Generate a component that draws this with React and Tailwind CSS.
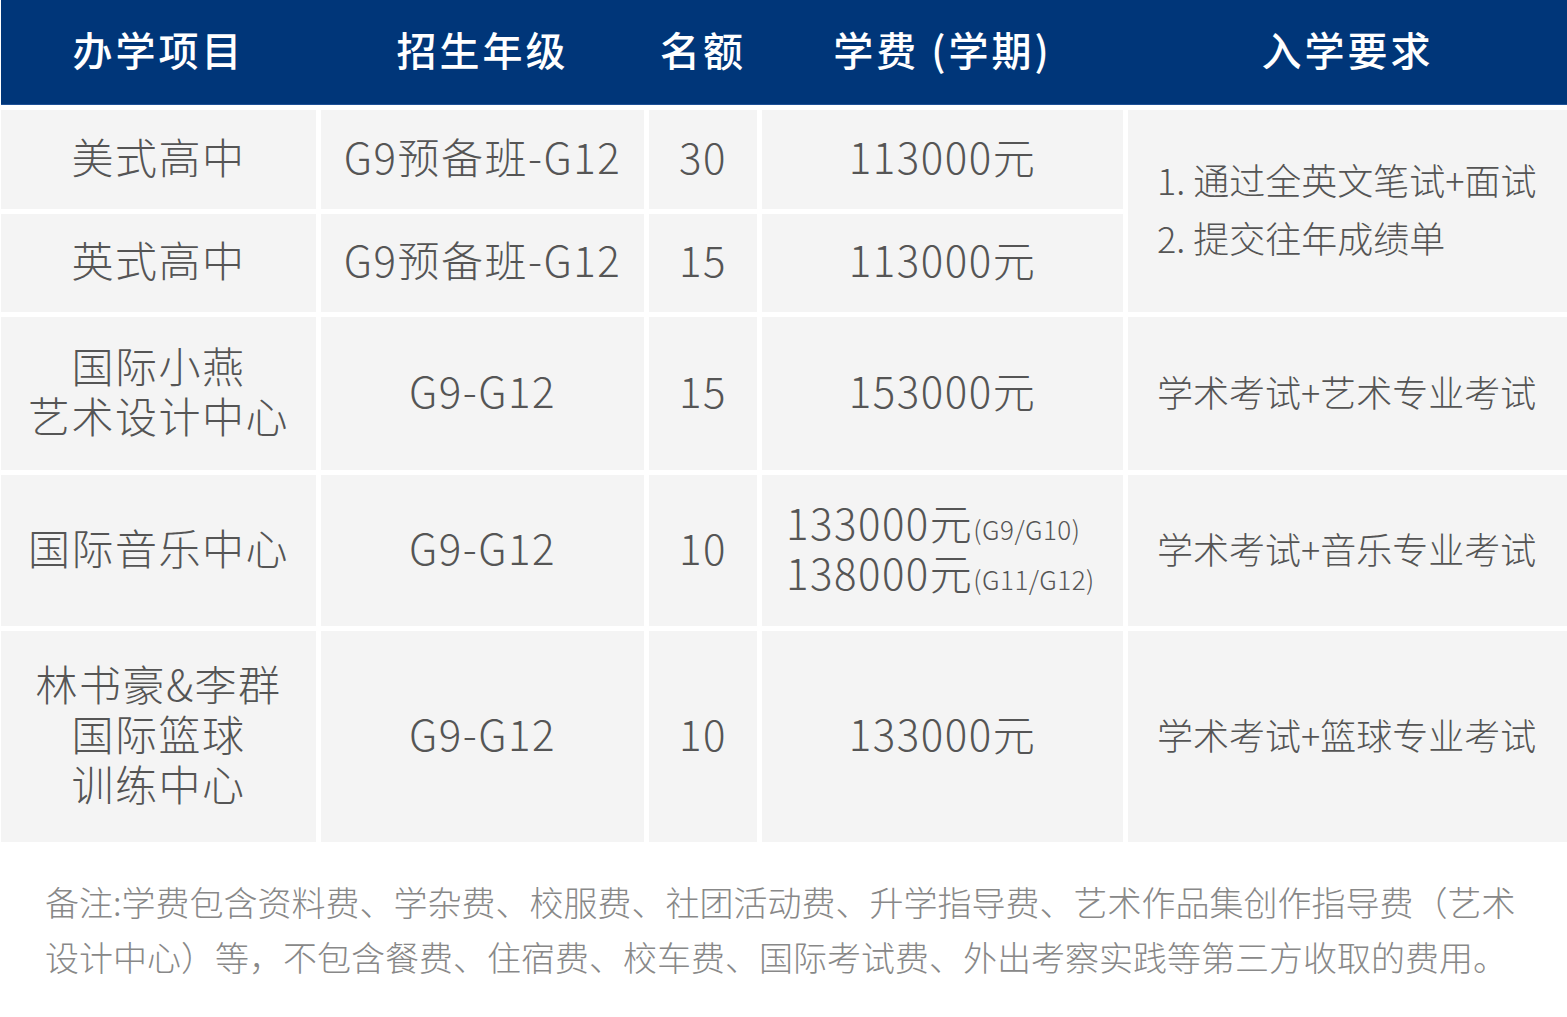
const font = { fontFamily: '"Noto Sans CJK SC", "Noto Sans", sans-serif' }

const Cell = ({ children, className = "" }) => (
  <div className={`bg-[#f4f4f4] flex items-center justify-center pb-[8px] text-center text-[#555] text-[42px] leading-[50px] tracking-[1.5px] font-light ${className}`}>
    {children}
  </div>
)

const Req = ({ children, className = "" }) => (
  <div className={`bg-[#f4f4f4] flex flex-col justify-center pl-[29px] pb-[6px] text-[#555] text-[36px] leading-[58px] font-light ${className}`}>
    {children}
  </div>
)

export default function App() {
  return (
    <div className="w-[1567px] h-[1017px] bg-white" style={font}>
      <div className="pl-[1px]">
        {/* header */}
        <div className="grid grid-cols-[315px_323px_108px_361px_439px] gap-x-[5px] h-[105px] pb-[6px] bg-[#003679] border-b border-[#1f5196] text-white text-[40px] font-medium tracking-[3px]">
          <div className="flex items-center justify-center">办学项目</div>
          <div className="flex items-center justify-center">招生年级</div>
          <div className="flex items-center justify-center">名额</div>
          <div className="flex items-center justify-center">学费 (学期)</div>
          <div className="flex items-center justify-center">入学要求</div>
        </div>

        <div className="grid grid-cols-[315px_323px_108px_361px_439px] grid-rows-[99px_98px_153px_151px_211px] gap-[5px] mt-[5px]">
          {/* row 1 */}
          <Cell>美式高中</Cell>
          <Cell>G9预备班-G12</Cell>
          <Cell>30</Cell>
          <Cell>113000元</Cell>
          <Req className="row-span-2">
            <div>1. 通过全英文笔试+面试</div>
            <div>2. 提交往年成绩单</div>
          </Req>

          {/* row 2 */}
          <Cell>英式高中</Cell>
          <Cell>G9预备班-G12</Cell>
          <Cell>15</Cell>
          <Cell>113000元</Cell>

          {/* row 3 */}
          <Cell>
            <div>
              国际小燕
              <br />
              艺术设计中心
            </div>
          </Cell>
          <Cell>G9-G12</Cell>
          <Cell>15</Cell>
          <Cell>153000元</Cell>
          <Req>学术考试+艺术专业考试</Req>

          {/* row 4 */}
          <Cell>国际音乐中心</Cell>
          <Cell>G9-G12</Cell>
          <Cell>10</Cell>
          <Cell className="justify-start pl-[24px]">
            <div className="text-left">
              <div className="h-[50px]">
                133000元<span className="text-[26px] leading-none tracking-[0.5px]">(G9/G10)</span>
              </div>
              <div className="h-[50px]">
                138000元<span className="text-[26px] leading-none tracking-[0.5px]">(G11/G12)</span>
              </div>
            </div>
          </Cell>
          <Req>学术考试+音乐专业考试</Req>

          {/* row 5 */}
          <Cell>
            <div>
              林书豪&amp;李群
              <br />
              国际篮球
              <br />
              训练中心
            </div>
          </Cell>
          <Cell>G9-G12</Cell>
          <Cell>10</Cell>
          <Cell>133000元</Cell>
          <Req>学术考试+篮球专业考试</Req>
        </div>
      </div>

      {/* note */}
      <p className="pl-[45px] pr-[40px] pt-[32px] text-[#888] text-[34px] leading-[55px] font-light">
        备注:学费包含资料费、学杂费、校服费、社团活动费、升学指导费、艺术作品集创作指导费（艺术设计中心）等，不包含餐费、住宿费、校车费、国际考试费、外出考察实践等第三方收取的费用。
      </p>
    </div>
  )
}
